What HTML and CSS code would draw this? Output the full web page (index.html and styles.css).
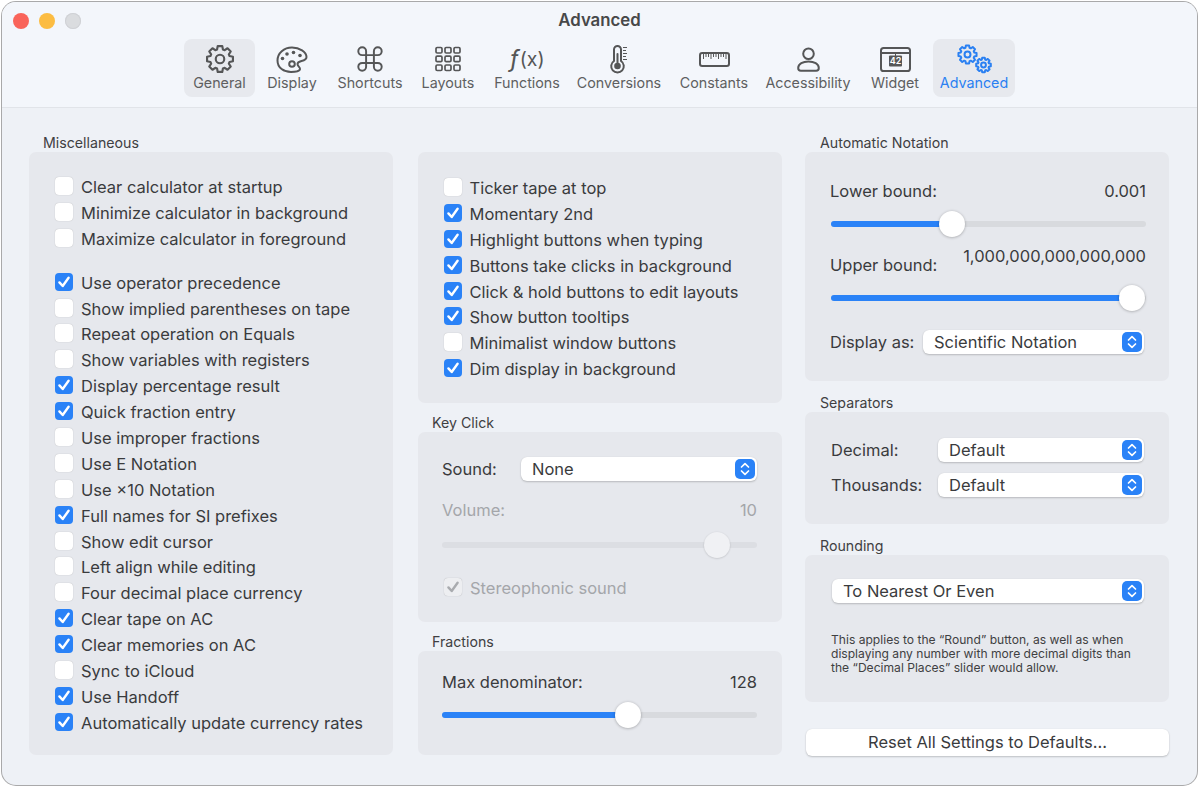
FILE: index.html
```html
<!DOCTYPE html>
<html lang="en">
<head>
<meta charset="utf-8">
<title>Advanced</title>
<link rel="stylesheet" href="styles.css">
</head>
<body>
<svg class="defs" aria-hidden="true">
  <symbol id="gear" viewBox="-12 -12 24 24" overflow="visible">
    <polygon points="-2.34,-7.65 -1.82,-10.34 1.82,-10.34 2.34,-7.65 3.75,-7.06 6.02,-8.6 8.6,-6.02 7.06,-3.75 7.65,-2.34 10.34,-1.82 10.34,1.82 7.65,2.34 7.06,3.75 8.6,6.02 6.02,8.6 3.75,7.06 2.34,7.65 1.82,10.34 -1.82,10.34 -2.34,7.65 -3.75,7.06 -6.02,8.6 -8.6,6.02 -7.06,3.75 -7.65,2.34 -10.34,1.82 -10.34,-1.82 -7.65,-2.34 -7.06,-3.75 -8.6,-6.02 -6.02,-8.6 -3.75,-7.06"/>
    <circle r="3.4"/>
  </symbol>
  <symbol id="updown" viewBox="0 0 20 20">
    <path d="M6.5 8 10 4.6 13.5 8M6.5 12 10 15.4 13.5 12"/>
  </symbol>
  <symbol id="tick" viewBox="0 0 18 18">
    <path d="M4.4 9.4 7.7 13 13.6 4.8"/>
  </symbol>
</svg>
<div class="window">
  <header class="head">
    <div class="titlebar">
      <div class="lights"><span class="light red"></span><span class="light amber"></span><span class="light grey"></span></div>
      <div class="title">Advanced</div>
      <div></div>
    </div>
    <nav class="toolbar">
      <div class="tool tile">
        <div class="icon"><svg class="ico gear-ico" width="30" height="30"><use href="#gear"/></svg></div>
        <span>General</span>
      </div>
      <div class="tool">
        <div class="icon"><svg class="ico" width="32" height="31" viewBox="0 0 32 31">
          <path d="M16 3.5C8 3.5 1.5 9 1.5 16.5S8 28 15 28c4 0 8-.5 9-2.5 1-2-2.5-3-2.5-5.5 0-2 2-2.5 4-3 3-.7 5-1.5 5-4 0-5-7-9.5-14.500-9.500z"/>
          <circle cx="16" cy="20" r="2.8"/>
          <g class="solid"><circle cx="6.5" cy="14.5" r="1.8"/><circle cx="11" cy="10" r="1.8"/><circle cx="17.5" cy="8.5" r="1.8"/><circle cx="24" cy="11.5" r="1.8"/></g>
        </svg></div>
        <span>Display</span>
      </div>
      <div class="tool">
        <div class="icon"><svg class="ico cmd-ico" width="26" height="26" viewBox="2 2 20 20">
          <path d="M15 6v12a3 3 0 1 0 3-3H6a3 3 0 1 0 3 3V6a3 3 0 1 0-3 3h12a3 3 0 1 0-3-3"/>
        </svg></div>
        <span>Shortcuts</span>
      </div>
      <div class="tool">
        <div class="icon"><svg class="ico grid-ico" width="26" height="26" viewBox="0 0 26 26">
          <rect x="1" y="1.5" width="6" height="5.5" rx="1.2"/><rect x="10" y="1.5" width="6" height="5.5" rx="1.2"/><rect x="19" y="1.5" width="6" height="5.5" rx="1.2"/>
          <rect x="1" y="10.2" width="6" height="5.5" rx="1.2"/><rect x="10" y="10.2" width="6" height="5.5" rx="1.2"/><rect x="19" y="10.2" width="6" height="5.5" rx="1.2"/>
          <rect x="1" y="19" width="6" height="5.5" rx="1.2"/><rect x="10" y="19" width="6" height="5.5" rx="1.2"/><rect x="19" y="19" width="6" height="5.5" rx="1.2"/>
        </svg></div>
        <span>Layouts</span>
      </div>
      <div class="tool">
        <div class="icon fx"><i>ƒ</i>(x)</div>
        <span>Functions</span>
      </div>
      <div class="tool">
        <div class="icon"><svg class="ico therm-ico" width="18" height="28" viewBox="0 0 18 28">
          <path d="M4 16V4.5a3.5 3.5 0 0 1 7 0V16a6.3 6.3 0 1 1-7 0z"/>
          <path class="ticks" d="M13 2.5h4M13 5.5h3M13 8.5h4M13 11.5h3M13 14.5h4"/>
          <circle class="solid" cx="7.5" cy="21" r="3.3"/>
          <path class="stem" d="M7.5 21V9"/>
        </svg></div>
        <span>Conversions</span>
      </div>
      <div class="tool">
        <div class="icon"><svg class="ico" width="31" height="15" viewBox="0 0 31 15">
          <rect x="1" y="1" width="29" height="13" rx="2.2"/>
          <path class="ticks" d="M4.5 2v5M7 2v3M9.5 2v3M12 2v5M14.5 2v3M17 2v3M19.5 2v5M22 2v3M24.5 2v3M27 2v5"/>
        </svg></div>
        <span>Constants</span>
      </div>
      <div class="tool">
        <div class="icon"><svg class="ico" width="23" height="25" viewBox="0 0 23 25">
          <circle cx="11.5" cy="6.8" r="5.3"/>
          <path d="M1.2 21c0-4.200 4.800-6.500 10.300-6.500S21.800 16.800 21.800 21c0 1.700-1 2.800-2.600 2.800H3.800C2.200 23.800 1.200 22.700 1.200 21z"/>
        </svg></div>
        <span>Accessibility</span>
      </div>
      <div class="tool">
        <div class="icon"><svg class="ico" width="31" height="25" viewBox="0 0 31 25">
          <rect x="1" y="1" width="29" height="23" rx="2.6"/>
          <path d="M1 6h29"/>
          <rect class="solid" x="9" y="8.500" width="13" height="11" rx="1"/>
          <path class="ticks" d="M15.500 6v3"/>
          <text class="w42" x="15.500" y="17.300">42</text>
        </svg></div>
        <span>Widget</span>
      </div>
      <div class="tool tile active">
        <div class="icon"><svg class="ico gears-ico" width="35" height="30" viewBox="0 0 35 30">
          <use class="big" href="#gear" x="0" y="0" width="21" height="21"/>
          <use class="small" href="#gear" x="18" y="12.500" width="17" height="17"/>
        </svg></div>
        <span>Advanced</span>
      </div>
    </nav>
  </header>

  <main class="body">
    <div class="col">
      <section class="section">
        <h2 class="cap">Miscellaneous</h2>
        <div class="panel misc">
          <div class="group">
            <div class="chk"><span class="box"></span>Clear calculator at startup</div>
            <div class="chk"><span class="box"></span>Minimize calculator in background</div>
            <div class="chk"><span class="box"></span>Maximize calculator in foreground</div>
          </div>
          <div class="group">
            <div class="chk"><span class="box on"><svg><use href="#tick"/></svg></span>Use operator precedence</div>
            <div class="chk"><span class="box"></span>Show implied parentheses on tape</div>
            <div class="chk"><span class="box"></span>Repeat operation on Equals</div>
            <div class="chk"><span class="box"></span>Show variables with registers</div>
            <div class="chk"><span class="box on"><svg><use href="#tick"/></svg></span>Display percentage result</div>
            <div class="chk"><span class="box on"><svg><use href="#tick"/></svg></span>Quick fraction entry</div>
            <div class="chk"><span class="box"></span>Use improper fractions</div>
            <div class="chk"><span class="box"></span>Use E Notation</div>
            <div class="chk"><span class="box"></span>Use ×10 Notation</div>
            <div class="chk"><span class="box on"><svg><use href="#tick"/></svg></span>Full names for SI prefixes</div>
            <div class="chk"><span class="box"></span>Show edit cursor</div>
            <div class="chk"><span class="box"></span>Left align while editing</div>
            <div class="chk"><span class="box"></span>Four decimal place currency</div>
            <div class="chk"><span class="box on"><svg><use href="#tick"/></svg></span>Clear tape on AC</div>
            <div class="chk"><span class="box on"><svg><use href="#tick"/></svg></span>Clear memories on AC</div>
            <div class="chk"><span class="box"></span>Sync to iCloud</div>
            <div class="chk"><span class="box on"><svg><use href="#tick"/></svg></span>Use Handoff</div>
            <div class="chk"><span class="box on"><svg><use href="#tick"/></svg></span>Automatically update currency rates</div>
          </div>
        </div>
      </section>
    </div>

    <div class="col">
      <section class="section nocap">
        <div class="panel ticker">
          <div class="chk"><span class="box"></span>Ticker tape at top</div>
          <div class="chk"><span class="box on"><svg><use href="#tick"/></svg></span>Momentary 2nd</div>
          <div class="chk"><span class="box on"><svg><use href="#tick"/></svg></span>Highlight buttons when typing</div>
          <div class="chk"><span class="box on"><svg><use href="#tick"/></svg></span>Buttons take clicks in background</div>
          <div class="chk"><span class="box on"><svg><use href="#tick"/></svg></span>Click &amp; hold buttons to edit layouts</div>
          <div class="chk"><span class="box on"><svg><use href="#tick"/></svg></span>Show button tooltips</div>
          <div class="chk"><span class="box"></span>Minimalist window buttons</div>
          <div class="chk"><span class="box on"><svg><use href="#tick"/></svg></span>Dim display in background</div>
        </div>
      </section>
      <section class="section tight">
        <h2 class="cap">Key Click</h2>
        <div class="panel keyclick">
          <div class="formrow">
            <span class="lbl sound-lbl">Sound:</span>
            <div class="select"><span>None</span><svg class="stepper"><use href="#updown"/></svg></div>
          </div>
          <div class="valrow dim vol"><span>Volume:</span><span>10</span></div>
          <div class="slider dis vol-slider"><div class="fill" style="width:87.3%"><span class="thumb"></span></div></div>
          <div class="chk dim stereo"><span class="box off"><svg><use href="#tick"/></svg></span>Stereophonic sound</div>
        </div>
      </section>
      <section class="section tight">
        <h2 class="cap">Fractions</h2>
        <div class="panel fractions">
          <div class="valrow"><span>Max denominator:</span><span>128</span></div>
          <div class="slider frac-slider"><div class="fill" style="width:59%"><span class="thumb"></span></div></div>
        </div>
      </section>
    </div>

    <div class="col">
      <section class="section">
        <h2 class="cap cap3">Automatic Notation</h2>
        <div class="panel auto">
          <div class="valrow"><span>Lower bound:</span><span>0.001</span></div>
          <div class="slider lower"><div class="fill" style="width:38.4%"><span class="thumb"></span></div></div>
          <div class="valrow upper-row"><span class="upper-lbl">Upper bound:</span><span class="upper-val">1,000,000,000,000,000</span></div>
          <div class="slider upper"><div class="fill" style="width:95.6%"><span class="thumb"></span></div></div>
          <div class="formrow display-row">
            <span class="lbl">Display as:</span>
            <div class="select"><span>Scientific Notation</span><svg class="stepper"><use href="#updown"/></svg></div>
          </div>
        </div>
      </section>
      <section class="section wide">
        <h2 class="cap cap3">Separators</h2>
        <div class="panel seps">
          <div class="formrow">
            <span class="lbl sep-lbl">Decimal:</span>
            <div class="select"><span>Default</span><svg class="stepper"><use href="#updown"/></svg></div>
          </div>
          <div class="formrow">
            <span class="lbl sep-lbl">Thousands:</span>
            <div class="select"><span>Default</span><svg class="stepper"><use href="#updown"/></svg></div>
          </div>
        </div>
      </section>
      <section class="section wide">
        <h2 class="cap cap3">Rounding</h2>
        <div class="panel rounding">
          <div class="select"><span>To Nearest Or Even</span><svg class="stepper"><use href="#updown"/></svg></div>
          <p class="note">This applies to the “Round” button, as well as when displaying any number with more decimal digits than the “Decimal Places” slider would allow.</p>
        </div>
      </section>
      <div class="reset">Reset All Settings to Defaults…</div>
    </div>
  </main>
</div>
</body>
</html>
```
FILE: styles.css
```css
* { box-sizing: border-box; }
html, body { margin: 0; height: 787px; overflow: hidden; background: #fff; }
body {
  padding: 2px;
  font-family: Inter, "Noto Sans", sans-serif;
  font-size: 16.5px;
  color: #3a3b3d;
}
.defs { display: none; }

.window {
  width: 1195px;
  height: 783px;
  border-radius: 14px;
  background: #eef1f6;
  box-shadow: 0 0 0 1px #a9a9aa;
  overflow: hidden;
  display: flex;
  flex-direction: column;
}

.head {
  height: 106px;
  flex: none;
  background: #f3f6fb;
  border-bottom: 1px solid #e1e4e9;
}
.titlebar {
  height: 37px;
  display: grid;
  grid-template-columns: 1fr auto 1fr;
  align-items: center;
}
.lights { display: flex; gap: 10px; padding-left: 11px; }
.light { width: 16px; height: 16px; border-radius: 50%; }
.red { background: #f9645a; }
.amber { background: #fcbc41; }
.grey { background: #dadcdf; box-shadow: inset 0 0 0 1px #cfd1d5; }
.title { font-size: 16.8px; font-weight: 600; color: #474849; padding-bottom: 2px; }

.toolbar {
  display: grid;
  grid-template-columns: 71px 74px 82px 74px 84px 100px 90px 98px 76px 82px;
  justify-content: center;
}
.tool {
  height: 58px;
  padding-top: 5px;
  border-radius: 8px;
  display: flex;
  flex-direction: column;
  align-items: center;
  font-size: 14.3px;
  line-height: 18px;
  color: #5e5f61;
  white-space: nowrap;
}
.tile { background: #e7e9ee; }
.active { color: #2a80f2; }
.icon {
  height: 30px;
  display: flex;
  align-items: center;
  justify-content: center;
}
.ico { fill: none; stroke: #555657; stroke-width: 2; stroke-linejoin: round; stroke-linecap: round; overflow: visible; flex: none; }
.ico .solid { fill: #555657; stroke: none; }
.gear-ico { stroke-width: 1.7; }
.cmd-ico { stroke-width: 1.5; }
.grid-ico { stroke-width: 1.7; }
.ticks { stroke-width: 1; stroke-linecap: butt; }
.stem { stroke-width: 2; }
.w42 { fill: #fff; stroke: none; font-size: 9px; font-weight: 600; text-anchor: middle; }
.gears-ico { stroke: #2a80f2; }
.gears-ico .big { stroke-width: 2.3; }
.gears-ico .small { stroke-width: 2.8; }
.fx { font-size: 19.5px; color: #555657; font-weight: 400; }
.fx i { font-style: italic; font-weight: 400; font-size: 24px; margin-right: 1px; }

.body {
  flex: 1;
  padding: 26px 0 0 27px;
  display: grid;
  grid-template-columns: 389px 387px 364px;
  align-items: start;
}
.col { width: 364px; display: flex; flex-direction: column; }
.nocap { padding-top: 18px; }
.tight { margin-top: 11px; }
.wide { margin-top: 13px; }
.cap {
  margin: 0;
  padding-left: 14px;
  height: 18px;
  font-size: 14.2px;
  font-weight: 400;
  line-height: 18px;
  color: #3f4042;
}
.cap3 { padding-left: 15px; }
.panel {
  background: #e6e8ed;
  border-radius: 7px;
}

.misc { height: 603px; padding: 22px 0 0 26px; display: flex; flex-direction: column; gap: 18px; }
.ticker { height: 251px; padding: 23px 0 0 25.5px; }
.chk { height: 25.9px; display: flex; align-items: center; gap: 8px; white-space: nowrap; }
.box {
  width: 18px; height: 18px;
  flex: none;
  border-radius: 4px;
  background: #fff;
  box-shadow: 0 0 1px 0 rgba(0,0,0,.28);
  position: relative;
  top: -1px;
}
.box svg { display: block; width: 18px; height: 18px; fill: none; stroke: #fff; stroke-width: 2.4; stroke-linecap: round; stroke-linejoin: round; }
.box.on { background: #2a82f7; box-shadow: none; }
.box.off { background: #edeef1; }
.box.off svg { stroke: #a9abaf; }

.dim { color: #a4a6aa; }
.formrow { display: flex; align-items: center; }
.lbl { white-space: nowrap; }
.select {
  flex: 1;
  height: 24px;
  padding: 0 2px 0 11px;
  background: #fff;
  border-radius: 6px;
  box-shadow: 0 1px 2px rgba(0,0,0,.2), 0 0 1px rgba(0,0,0,.1);
  display: flex;
  align-items: center;
  justify-content: space-between;
  white-space: nowrap;
}
.stepper {
  width: 20px; height: 20px;
  border-radius: 5px;
  background: #2a82f7;
  fill: none; stroke: #fff; stroke-width: 1.7; stroke-linecap: round; stroke-linejoin: round;
}
.valrow { display: flex; justify-content: space-between; align-items: center; }

.slider { height: 6px; border-radius: 3px; background: #d8dade; }
.fill { height: 6px; border-radius: 3px; background: #2a82f7; position: relative; }
.thumb {
  position: absolute;
  right: -13px; top: -10px;
  width: 26px; height: 26px;
  border-radius: 50%;
  background: #fff;
  box-shadow: 0 .5px 3px rgba(0,0,0,.3);
}
.dis { background: #dcdee3; }
.dis .fill { background: transparent; }
.dis .thumb { background: #f0f1f4; box-shadow: 0 .5px 2px rgba(0,0,0,.18); }

.keyclick { height: 190px; padding: 25px 25px 0 24px; }
.sound-lbl { width: 79px; }
.vol { height: 24px; margin-top: 17px; }
.vol-slider { margin-top: 20px; }
.stereo { margin: 27px 0 0 2px; gap: 8px; }

.fractions { height: 104px; padding: 19px 25px 0 24px; }
.fractions .valrow { height: 24px; }
.frac-slider { margin-top: 18px; }

.auto { height: 229px; padding: 27px 23px 0 25px; }
.auto .valrow { height: 24px; }
.lower { margin: 18px 0 0 1px; }
.upper-row { margin-top: 17px; height: 24px; }
.upper-lbl { position: relative; top: 9px; }
.upper-val { position: relative; }
.upper { margin: 27px 0 0 1px; }
.display-row { margin-top: 29px; padding-right: 2px; }
.display-row .lbl { width: 93px; }

.seps { height: 112px; padding: 26px 25px 0 26px; display: flex; flex-direction: column; gap: 11px; }
.sep-lbl { width: 107px; }

.rounding { height: 147px; padding: 24px 25px 0 27px; }
.note { margin: 30px 0 0 -1px; font-size: 12.1px; line-height: 14px; color: #3f4042; }

.reset {
  margin: 27px 0 0 1px;
  height: 27px;
  padding-bottom: 2px;
  background: #fff;
  border-radius: 6px;
  box-shadow: 0 1px 2px rgba(0,0,0,.2), 0 0 1px rgba(0,0,0,.1);
  display: flex;
  align-items: center;
  justify-content: center;
  white-space: nowrap;
}
```
